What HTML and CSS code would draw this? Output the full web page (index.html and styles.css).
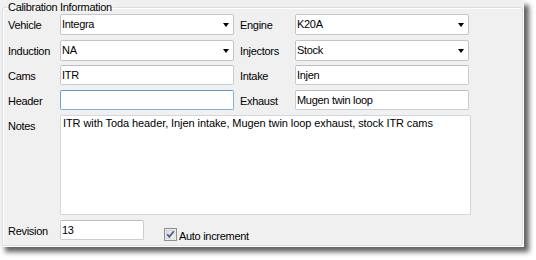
FILE: index.html
```html
<!DOCTYPE html>
<html>
<head>
<meta charset="utf-8">
<link rel="stylesheet" href="styles.css">
</head>
<body>
<div class="window">
  <fieldset class="group">
    <legend class="group-title">Calibration Information</legend>
    <div class="form">
      <label class="lbl">Vehicle</label>
      <div class="combo"><span class="combo-text">Integra</span><span class="arrow"></span></div>
      <label class="lbl lbl-right">Engine</label>
      <div class="combo"><span class="combo-text">K20A</span><span class="arrow"></span></div>

      <label class="lbl">Induction</label>
      <div class="combo"><span class="combo-text">NA</span><span class="arrow"></span></div>
      <label class="lbl lbl-right">Injectors</label>
      <div class="combo"><span class="combo-text">Stock</span><span class="arrow"></span></div>

      <label class="lbl">Cams</label>
      <input class="text" type="text" value="ITR">
      <label class="lbl lbl-right">Intake</label>
      <input class="text" type="text" value="Injen">

      <label class="lbl">Header</label>
      <input class="text focused" type="text" value="">
      <label class="lbl lbl-right">Exhaust</label>
      <input class="text" type="text" value="Mugen twin loop">

      <label class="lbl">Notes</label>
      <textarea class="notes">ITR with Toda header, Injen intake, Mugen twin loop exhaust, stock ITR cams</textarea>

      <label class="lbl">Revision</label>
      <div class="rev-row">
        <input class="text rev" type="text" value="13">
        <label class="check">
          <svg class="check-box" width="13" height="13" viewBox="0 0 13 13">
            <defs>
              <linearGradient id="cg" x1="0" y1="0" x2="1" y2="1">
                <stop offset="0" stop-color="#d9d9d9"/>
                <stop offset="1" stop-color="#f6f6f6"/>
              </linearGradient>
            </defs>
            <rect x="0.5" y="0.5" width="12" height="12" fill="#f4f4f4" stroke="#8f8f8f"/>
            <rect x="2" y="2" width="9" height="9" fill="url(#cg)" stroke="#c8c8c8" stroke-width="0.6"/>
            <path d="M3.2 6.3 L5.3 8.8 L9.8 3.2" fill="none" stroke="#3f5c99" stroke-width="1.7"/>
          </svg>
          <span>Auto increment</span>
        </label>
      </div>
    </div>
  </fieldset>
</div>
</body>
</html>
```

FILE: styles.css
```css
* { box-sizing: border-box; }

html, body {
  margin: 0;
  padding: 0;
  background: #ffffff;
}

body {
  font-family: "Liberation Sans", Arial, sans-serif;
  font-size: 11px;
  letter-spacing: -0.3px;
  color: #000;
  width: 536px;
  height: 260px;
  overflow: hidden;
}

.window {
  width: 524px;
  height: 247px;
  background: #f0f0f0;
  padding-top: 1px;
  box-shadow: 5px 5px 5px rgba(0, 0, 0, 0.62);
}

.group {
  margin: 0 0 0 2px;
  padding: 0 0 0 5px;
  width: 521px;
  height: 245px;
  border: 1px solid #d5dfe5;
  border-radius: 3px;
  box-shadow: 1px 1px 0 #ffffff, inset 1px 1px 0 #ffffff;
  min-width: 0;
}

.group-title {
  padding: 0 1px;
  margin-left: -1px;
  line-height: 13px;
  height: 13px;
  color: #000;
}

.form {
  display: grid;
  grid-template-columns: 52px 174px 61px 174px;
  grid-template-rows: 22px 21px 21px 21px 101px 20px;
  row-gap: 4px;
  align-items: start;
}

.lbl {
  padding-top: 5px;
  line-height: 13px;
  white-space: nowrap;
}

.lbl-right {
  padding-left: 6px;
}

.combo {
  height: 21px;
  width: 174px;
  background: #fff;
  border: 1px solid #c3c5c9;
  border-radius: 2px;
  display: flex;
  align-items: center;
  padding: 0 4px 0 1px;
  line-height: 13px;
}

.combo-text {
  flex: 1;
}

.arrow {
  width: 0;
  height: 0;
  border-left: 3.5px solid transparent;
  border-right: 3.5px solid transparent;
  border-top: 4px solid #000;
  margin-top: 1px;
}

.text {
  height: 20px;
  width: 174px;
  margin: 0;
  background: #fff;
  border: 1px solid #c9ccd2;
  border-top-color: #b9bcc3;
  border-radius: 2px;
  padding: 0 1px;
  font: inherit;
  letter-spacing: inherit;
  color: #000;
  line-height: 13px;
  outline: none;
}

.text.focused {
  border-color: #7fb1de;
  border-top-color: #5b97cf;
  border-left-color: #6aa3d6;
}

.notes {
  grid-column: 2 / 5;
  width: 411px;
  height: 100px;
  margin: 0;
  background: #fff;
  border: 1px solid #d3d6db;
  border-radius: 1px;
  padding: 1px 2px;
  font: inherit;
  letter-spacing: -0.08px;
  line-height: 13px;
  color: #000;
  resize: none;
  outline: none;
  overflow: hidden;
}

.rev-row {
  grid-column: 2 / 5;
  display: flex;
  align-items: flex-start;
}

.text.rev {
  width: 84px;
}

.check {
  display: flex;
  align-items: center;
  margin-left: 20px;
  margin-top: 6px;
  line-height: 13px;
}

.check-box {
  display: block;
  margin-right: 2px;
}

.check span {
  margin-top: 4px;
}
```
